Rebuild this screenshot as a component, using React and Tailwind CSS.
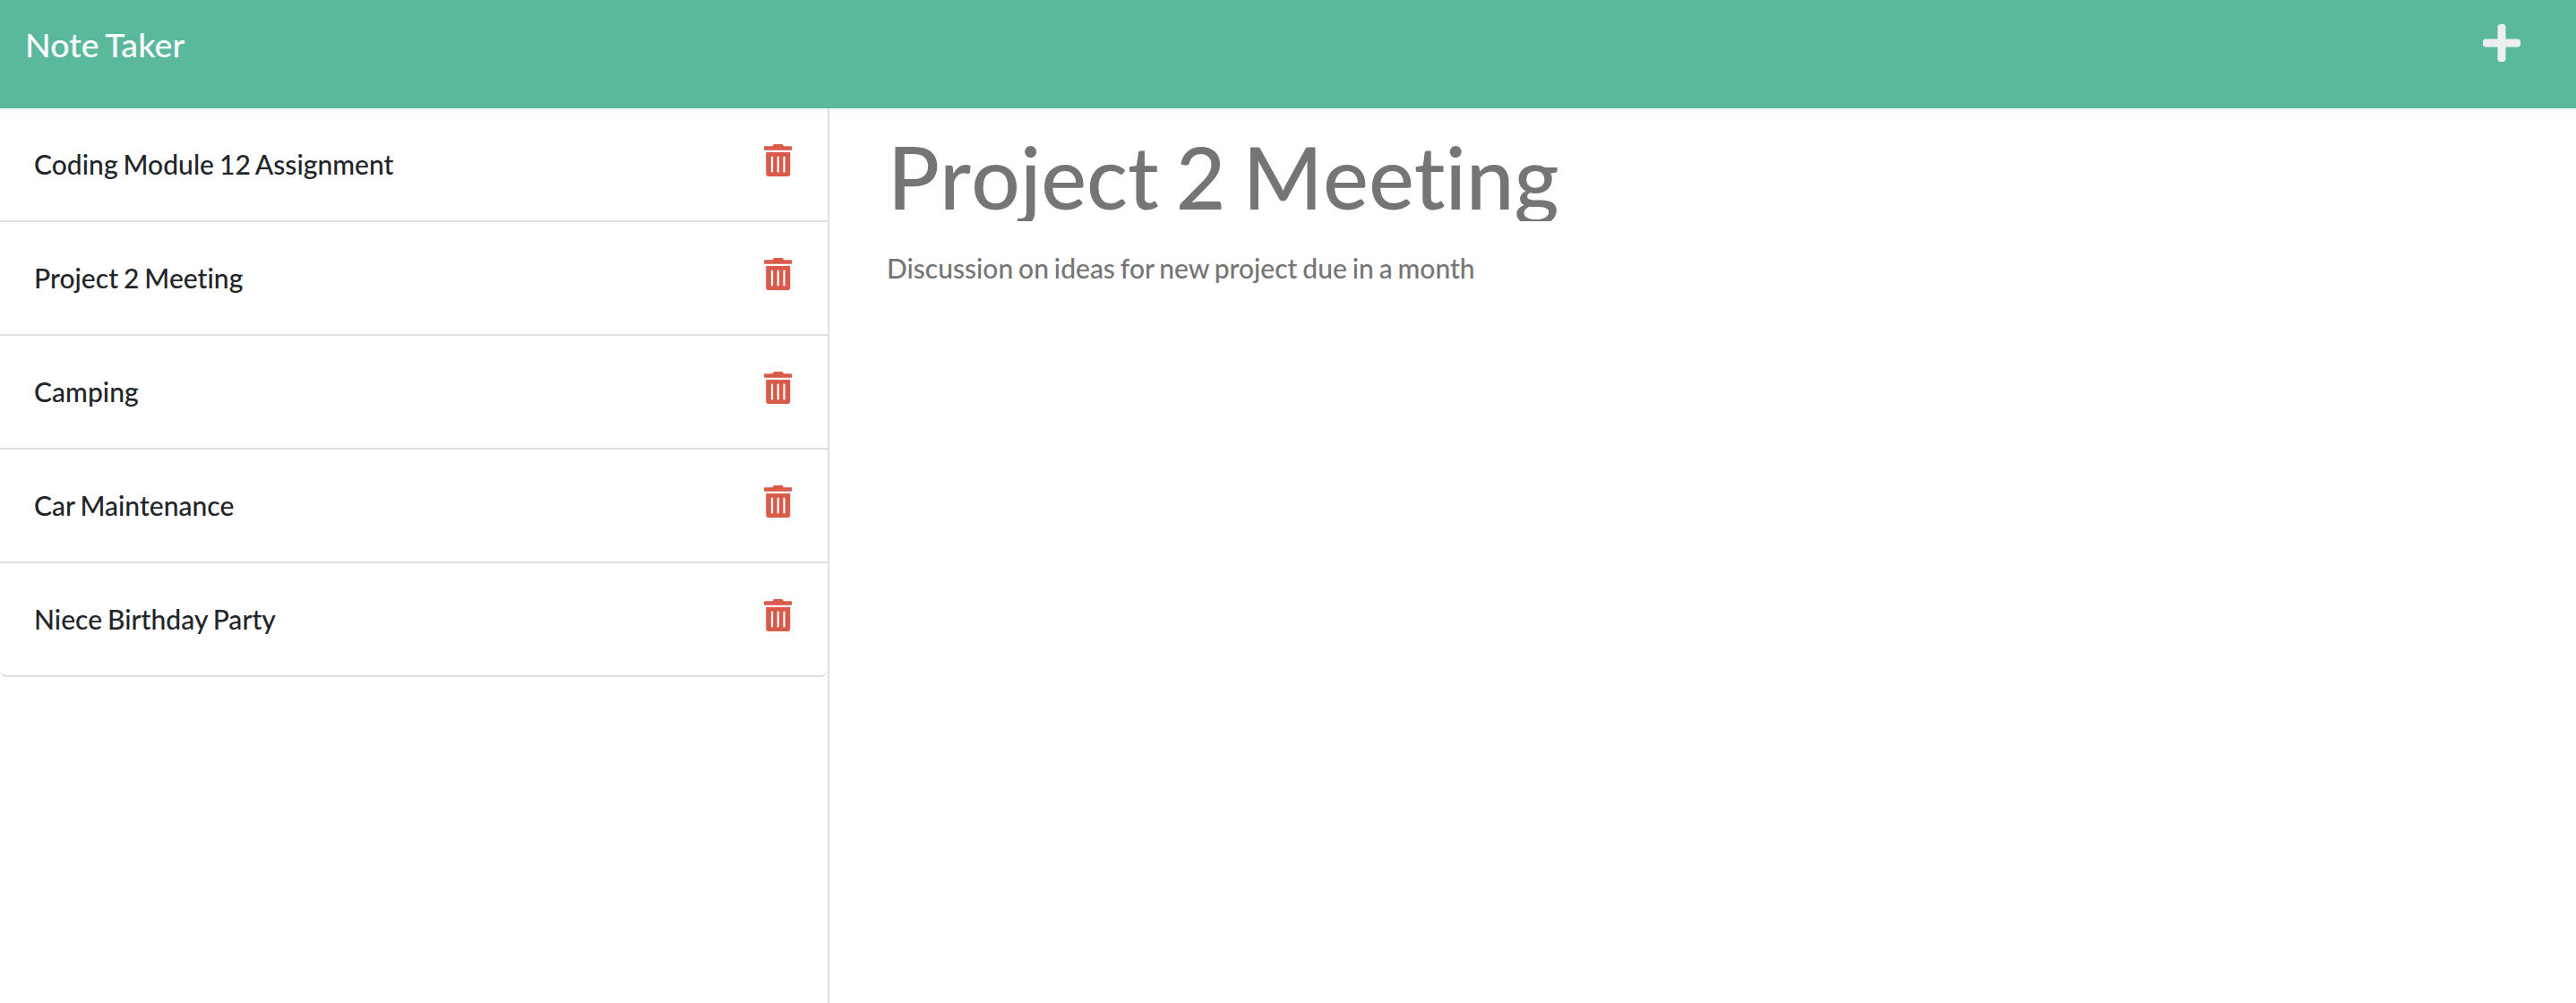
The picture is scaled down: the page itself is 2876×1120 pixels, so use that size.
import { FaPlus, FaTrashAlt } from "react-icons/fa";

const notes = [
  "Coding Module 12 Assignment",
  "Project 2 Meeting",
  "Camping",
  "Car Maintenance",
  "Niece Birthday Party",
];

function Header() {
  return (
    <header className="flex h-[121px] items-start justify-between bg-[#5ab99d] pl-7 pr-[62px]">
      <a className="mt-[22px] text-[37.5px] leading-[55px] tracking-[0.1px] text-white [word-spacing:-2px]">
        Note Taker
      </a>
      <button aria-label="New note" className="mt-6 text-[#eceff0]">
        <FaPlus className="h-12 w-[42px]" />
      </button>
    </header>
  );
}

function NoteItem({ title }) {
  return (
    <li className="flex h-[127px] items-start justify-between border-b-2 border-[#dfdfdf] pl-[38px] pr-10 last:rounded-b-lg">
      <span className="mt-10 text-[30px] leading-[44px] tracking-[0.04px] text-[#212529] [word-spacing:-1.7px]">
        {title}
      </span>
      <button aria-label="Delete note" className="mt-10 text-[#d95a48]">
        <FaTrashAlt className="h-9 w-[31.5px]" />
      </button>
    </li>
  );
}

export default function App() {
  return (
    <div className="flex h-[1120px] flex-col overflow-hidden bg-white font-['Lato',sans-serif] font-medium [font-variant-ligatures:none]">
      <Header />
      <div className="flex flex-1">
        <aside className="w-[926px] border-r-2 border-[#dfdfdf]">
          <ul>
            {notes.map((title) => (
              <NoteItem key={title} title={title} />
            ))}
          </ul>
        </aside>
        <main className="flex-1 pl-16">
          <h1 className="mt-[28px] h-[98px] overflow-hidden pl-px text-[96px] leading-[96px] text-[#757575] [font-kerning:none] [word-spacing:-5.2px]">
            Project 2 Meeting
          </h1>
          <p className="mt-[30px] text-[30px] leading-[44px] text-[#757575] [word-spacing:-1.7px]">
            Discussion on ideas for new project due in a month
          </p>
        </main>
      </div>
    </div>
  );
}
